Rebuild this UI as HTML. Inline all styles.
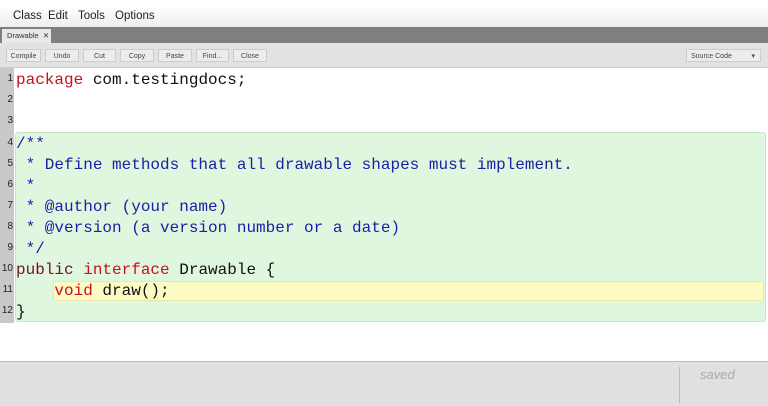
<!DOCTYPE html>
<html><head><style>
body{margin:0;width:768px;height:405px;overflow:hidden;background:#fff;font-family:"Liberation Sans",sans-serif;position:relative}
.title{position:absolute;top:0;left:0;width:768px;height:6px;background:#fff;font-size:9px;color:#999;line-height:0}
.menu{position:absolute;top:6px;left:0;width:768px;height:21px;background:linear-gradient(#fff,#eee);font-size:11.5px;color:#222}
.menu span{position:absolute;top:4px}
.tabs{position:absolute;top:27px;left:0;width:768px;height:16px;background:#7f7f7f}
.tab{position:absolute;left:2px;top:2px;width:49px;height:14px;background:#e8e8e8;font-size:7.5px;color:#333;line-height:14px;padding-left:5px;box-sizing:border-box}
.tb{position:absolute;top:43px;left:0;width:768px;height:24px;background:#e2e2e2;border-bottom:1px solid #ccc}
.b{position:absolute;top:6px;height:13px;background:#ececec;border:1px solid #ccc;font-size:7px;color:#444;text-align:center;line-height:13px;box-sizing:border-box}
.gut{position:absolute;left:0;top:68px;width:14px;height:255px;background:#c8c8c8}
.ln{position:absolute;left:0;width:13px;text-align:right;font-size:10px;color:#222;font-family:"Liberation Sans",sans-serif}
.green{position:absolute;left:15px;top:132px;width:751px;height:190px;background:#e0f7df;border:1px solid #c8e6c6;border-radius:3px;box-sizing:border-box}
.yel{position:absolute;left:53px;top:281px;width:711px;height:20px;background:#fdfbc4;border:1px solid #ede8a8;border-radius:2px;box-sizing:border-box}
.code{position:absolute;left:16px;font-family:"Liberation Mono",monospace;font-size:16px;white-space:pre;color:#111}
.k{color:#c8101d}.c{color:#1c1ca8}.p{color:#7a0f2a}
.status{position:absolute;top:361px;left:0;width:768px;height:44px;background:#e0e0e0;border-top:1px solid #bbb}
</style></head><body>
<div class="title">&nbsp;</div>
<div class="menu"><span style="left:13px">Class</span><span style="left:48px">Edit</span><span style="left:78px">Tools</span><span style="left:115px">Options</span></div>
<div class="tabs"><div class="tab">Drawable &nbsp;✕</div></div>
<div class="tb">
<div class="b" style="left:6px;width:35px">Compile</div>
<div class="b" style="left:45px;width:34px">Undo</div>
<div class="b" style="left:83px;width:33px">Cut</div>
<div class="b" style="left:120px;width:34px">Copy</div>
<div class="b" style="left:158px;width:34px">Paste</div>
<div class="b" style="left:196px;width:33px">Find...</div>
<div class="b" style="left:233px;width:34px">Close</div>
<div class="b" style="left:686px;width:75px;text-align:left;padding-left:4px">Source Code<span style="position:absolute;right:5px">▾</span></div>
</div>
<div class="gut"></div>
<div class="green"></div>
<div class="yel"></div>
<div class="ln" style="top:73px">1</div><div class="ln" style="top:94px">2</div><div class="ln" style="top:115px">3</div><div class="ln" style="top:137px">4</div><div class="ln" style="top:158px">5</div><div class="ln" style="top:179px">6</div><div class="ln" style="top:200px">7</div><div class="ln" style="top:221px">8</div><div class="ln" style="top:242px">9</div><div class="ln" style="top:263px">10</div><div class="ln" style="top:284px">11</div><div class="ln" style="top:305px">12</div>
<div class="code" style="top:71px"><span class="k">package</span> com.testingdocs;</div>
<div class="code c" style="top:135px">/**</div>
<div class="code c" style="top:156px"> * Define methods that all drawable shapes must implement.</div>
<div class="code c" style="top:177px"> *</div>
<div class="code c" style="top:198px"> * @author (your name)</div>
<div class="code c" style="top:219px"> * @version (a version number or a date)</div>
<div class="code c" style="top:240px"> */</div>
<div class="code" style="top:261px"><span class="p">public</span> <span class="k">interface</span> Drawable {</div>
<div class="code" style="top:282px">    <span class="k">void</span> draw();</div>
<div class="code" style="top:303px">}</div>
<div class="status"><div style="position:absolute;left:679px;top:5px;width:1px;height:36px;background:#bbb"></div><div style="position:absolute;left:700px;top:5px;font-size:13px;font-style:italic;color:#aaa">saved</div></div>
</body></html>
